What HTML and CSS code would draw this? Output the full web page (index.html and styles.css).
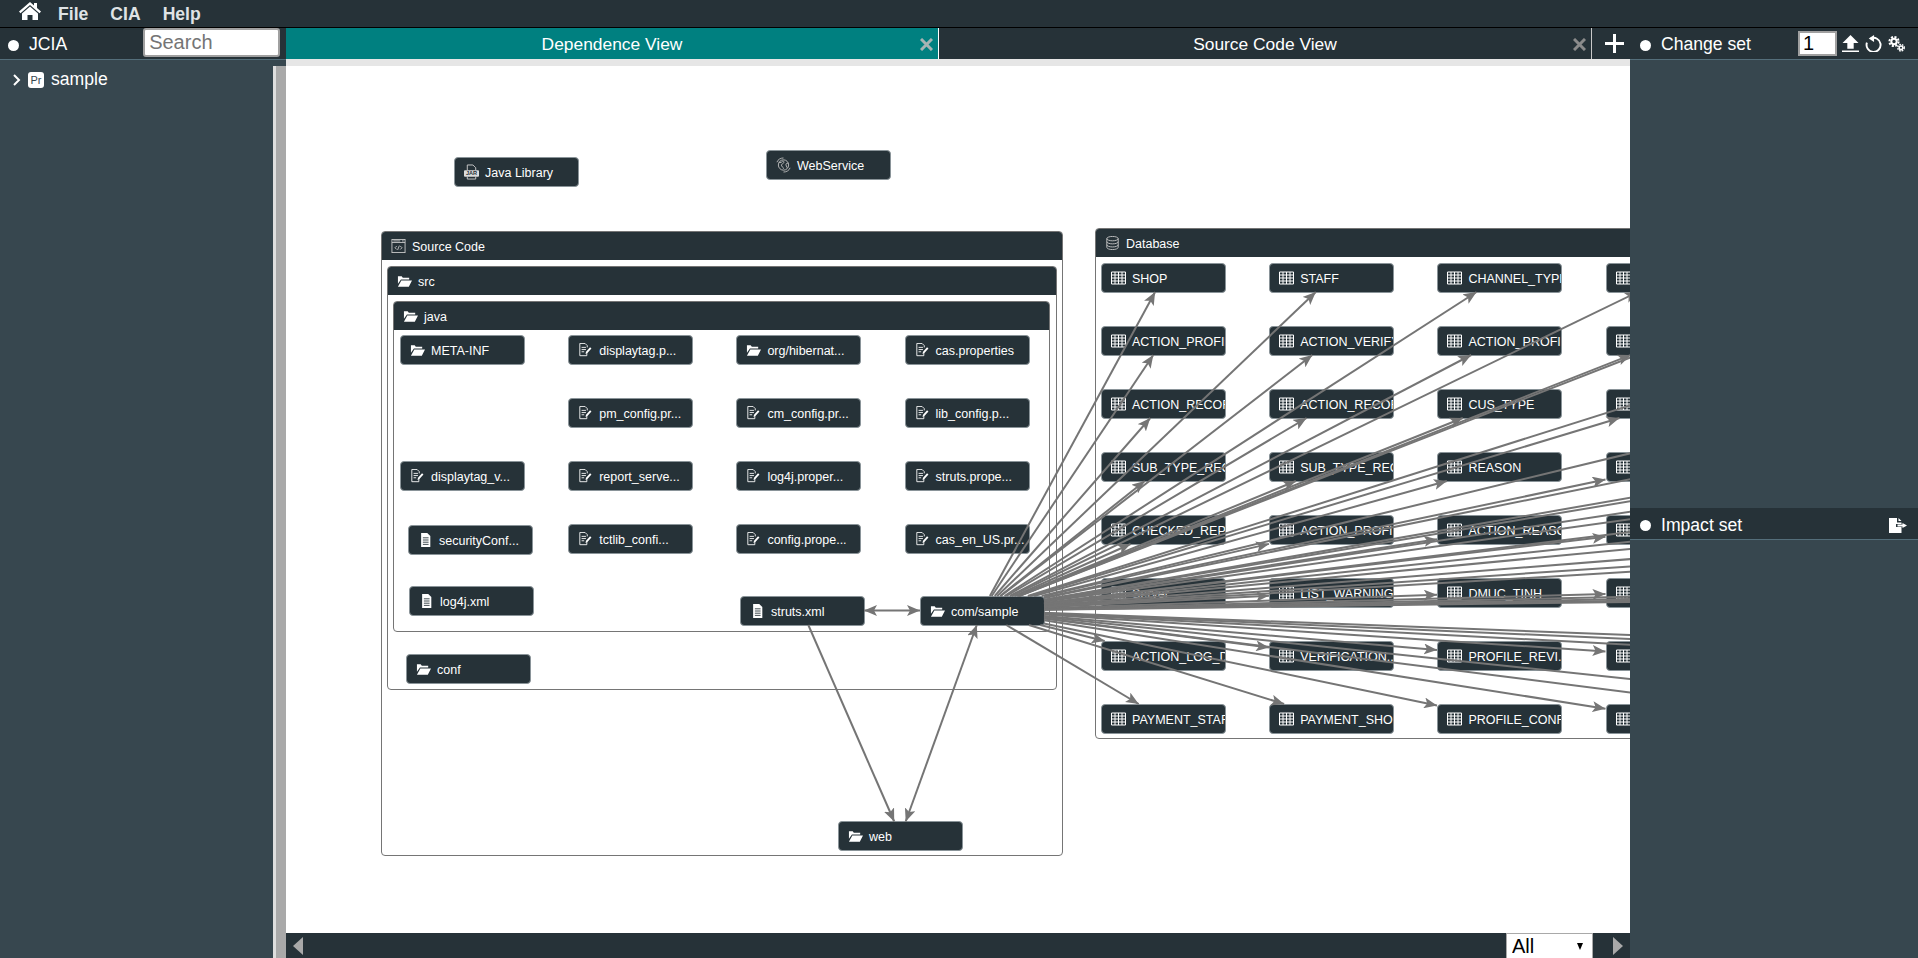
FILE: index.html

```html
<!DOCTYPE html>
<html lang="en">
<head>
  <meta charset="UTF-8" />
  <title>JCIA</title>
  <link rel="stylesheet" href="styles.css">
</head>
<body>
  <svg class="defs" aria-hidden="true">
    <symbol id="i-folder" viewBox="0 0 16 13">
      <path fill="#fff" d="M1 1.500h4l1.200 1.500H13v2H4.200L1 9.500zM4.600 6H16l-3.400 6.500H1z"/>
    </symbol>
    <symbol id="i-edit" viewBox="0 0 16 16">
      <path fill="none" stroke="#fff" d="M9.500 11.500v3h-8v-14h6l2.500 2.500v2M3.500 5h5M3.500 7.500h5M3.500 10h3"/>
      <path fill="#fff" d="M8 12.500l.6-2.400 4.600-5.200 1.600 1.400-4.600 5.200z"/>
    </symbol>
    <symbol id="i-file" viewBox="0 0 16 16">
      <path fill="#fff" d="M3 0h7l3.500 3.500V16H3z"/>
      <path stroke="#263238" d="M5 5.500h6.500M5 8h6.500M5 10.500h6.500M5 13h6.500"/>
    </symbol>
    <symbol id="i-table" viewBox="0 0 15 13">
      <path fill="none" stroke="#fff" d="M.5.500h14v12H.5zM.5 3.500h14M.5 6.500h14M.5 9.500h14M4 .5v12M7.500.5v12M11 .5v12"/>
    </symbol>
  </svg>

  <div class="app">
    <nav class="menu">
      <svg class="home" viewBox="0 0 24 20"><path fill="#fff" d="M12 1L1 10.500l1.500 1.700L12 4l9.500 8.200 1.500-1.700-4-3.400V2h-3v2.500z"/><path fill="#fff" d="M12 5.500l-8 6.900V19h5.500v-5h5v5H20v-6.600z"/></svg>
      <a class="menu-item">File</a>
      <a class="menu-item">CIA</a>
      <a class="menu-item">Help</a>
    </nav>

    <div class="workspace">
      <aside class="left">
        <div class="panel-head">
          <span class="dot"></span>
          <span class="panel-title">JCIA</span>
          <input class="search" type="text" placeholder="Search">
        </div>
        <div class="left-body">
          <div class="tree">
            <div class="tree-row">
              <svg class="chevron" viewBox="0 0 8 12"><path fill="none" stroke="#fff" stroke-width="2" d="M1.500 1l5 5-5 5"/></svg>
              <span class="pr">Pr</span>
              <span>sample</span>
            </div>
          </div>
          <div class="splitter"></div>
        </div>
      </aside>

      <main class="center">
        <div class="tabs">
          <div class="tab tab-active">
            <span>Dependence View</span>
            <svg class="close" viewBox="0 0 13 13"><path stroke="#a7b3b3" stroke-width="3" d="M1 1l11 11M12 1L1 12"/></svg>
          </div>
          <div class="tab">
            <span>Source Code View</span>
            <svg class="close" viewBox="0 0 13 13"><path stroke="#8b8b8b" stroke-width="3" d="M1 1l11 11M12 1L1 12"/></svg>
          </div>
          <svg class="plus" viewBox="0 0 19 19"><path stroke="#fff" stroke-width="3" d="M9.500 0v19M0 9.500h19"/></svg>
        </div>
        <div class="strip"></div>

        <div class="canvas">
          <div class="node node-jar">
            <svg class="ico ico-big" viewBox="0 0 16 16">
              <path fill="none" stroke="#ccc" d="M3.500 6V.5h6l3 3V6M3.500 13v2.500h9V13"/>
              <rect x="0" y="6" width="16" height="7" rx="1" fill="#ddd"/>
              <text x="8" y="11.500" font-size="6" font-weight="bold" text-anchor="middle" fill="#263238">JAR</text>
            </svg>
            <span class="label">Java Library</span>
          </div>
          <div class="node node-ws">
            <svg class="ico ico-big" viewBox="0 0 16 16">
              <g fill="none" stroke="#bbb"><circle cx="8" cy="8" r="5.500"/><path d="M3 5c2 1 3 0 4-1s2 1 1 2-3 1-2 3 2 1 2 3M13 6c-2 0-3 1-2 3s1 2 1 2M1 5C2 2 5 .5 8 .5M15 11c-1 3-4 4.500-7 4.500"/></g>
            </svg>
            <span class="label">WebService</span>
          </div>

          <section class="group group-source">
            <header class="group-head">
              <svg class="ico" viewBox="0 0 16 16">
                <g fill="none" stroke="#ccc"><rect x=".5" y=".5" width="15" height="15"/><path d="M.5 4h15M2 2.200h8M12 2.200h2M6 8L4 10l2 2M10 8l2 2-2 2M9 7.500l-2 5"/></g>
              </svg>
              <span class="label">Source Code</span>
            </header>
            <div class="group-body body-source">
              <section class="group group-src">
                <header class="group-head">
                  <svg class="ico"><use href="#i-folder"/></svg>
                  <span class="label">src</span>
                </header>
                <div class="group-body body-src">
                  <section class="group group-java">
                    <header class="group-head">
                      <svg class="ico"><use href="#i-folder"/></svg>
                      <span class="label">java</span>
                    </header>
                    <div class="group-body body-java">
                      <div class="grid grid-java">
                        <div class="node"><svg class="ico"><use href="#i-folder"/></svg><span class="label">META-INF</span></div>
                        <div class="node"><svg class="ico"><use href="#i-edit"/></svg><span class="label">displaytag.p...</span></div>
                        <div class="node"><svg class="ico"><use href="#i-folder"/></svg><span class="label">org/hibernat...</span></div>
                        <div class="node"><svg class="ico"><use href="#i-edit"/></svg><span class="label">cas.properties</span></div>

                        <div class="node col-2"><svg class="ico"><use href="#i-edit"/></svg><span class="label">pm_config.pr...</span></div>
                        <div class="node"><svg class="ico"><use href="#i-edit"/></svg><span class="label">cm_config.pr...</span></div>
                        <div class="node"><svg class="ico"><use href="#i-edit"/></svg><span class="label">lib_config.p...</span></div>

                        <div class="node"><svg class="ico"><use href="#i-edit"/></svg><span class="label">displaytag_v...</span></div>
                        <div class="node"><svg class="ico"><use href="#i-edit"/></svg><span class="label">report_serve...</span></div>
                        <div class="node"><svg class="ico"><use href="#i-edit"/></svg><span class="label">log4j.proper...</span></div>
                        <div class="node"><svg class="ico"><use href="#i-edit"/></svg><span class="label">struts.prope...</span></div>

                        <div class="node col-2"><svg class="ico"><use href="#i-edit"/></svg><span class="label">tctlib_confi...</span></div>
                        <div class="node"><svg class="ico"><use href="#i-edit"/></svg><span class="label">config.prope...</span></div>
                        <div class="node"><svg class="ico"><use href="#i-edit"/></svg><span class="label">cas_en_US.pr...</span></div>
                      </div>
                      <div class="node node-security"><svg class="ico"><use href="#i-file"/></svg><span class="label">securityConf...</span></div>
                      <div class="node node-log4j"><svg class="ico"><use href="#i-file"/></svg><span class="label">log4j.xml</span></div>
                      <div class="node node-struts"><svg class="ico"><use href="#i-file"/></svg><span class="label">struts.xml</span></div>
                      <div class="node node-sample"><svg class="ico"><use href="#i-folder"/></svg><span class="label">com/sample</span></div>
                    </div>
                  </section>
                  <div class="node node-conf"><svg class="ico"><use href="#i-folder"/></svg><span class="label">conf</span></div>
                </div>
              </section>
              <div class="node node-web"><svg class="ico"><use href="#i-folder"/></svg><span class="label">web</span></div>
            </div>
          </section>

          <section class="group group-db">
            <header class="group-head">
              <svg class="ico" viewBox="0 0 16 16">
                <g fill="none" stroke="#ccc"><ellipse cx="8" cy="3" rx="6.500" ry="2.500"/><path d="M1.500 3v10c0 1.400 3 2.500 6.500 2.500s6.500-1.100 6.500-2.500V3M1.500 6.500C1.500 7.900 4.500 9 8 9s6.500-1.100 6.500-2.500M1.500 10c0 1.400 3 2.500 6.500 2.500s6.500-1.100 6.500-2.500"/></g>
              </svg>
              <span class="label">Database</span>
            </header>
            <div class="group-body body-db">
              <div class="grid grid-db">
                <div class="node"><svg class="ico"><use href="#i-table"/></svg><span class="label">SHOP</span></div>
                <div class="node"><svg class="ico"><use href="#i-table"/></svg><span class="label">STAFF</span></div>
                <div class="node"><svg class="ico"><use href="#i-table"/></svg><span class="label">CHANNEL_TYPE</span></div>
                <div class="node"><svg class="ico"><use href="#i-table"/></svg></div>

                <div class="node"><svg class="ico"><use href="#i-table"/></svg><span class="label">ACTION_PROFILE</span></div>
                <div class="node"><svg class="ico"><use href="#i-table"/></svg><span class="label">ACTION_VERIFY</span></div>
                <div class="node"><svg class="ico"><use href="#i-table"/></svg><span class="label">ACTION_PROFILE</span></div>
                <div class="node"><svg class="ico"><use href="#i-table"/></svg></div>

                <div class="node"><svg class="ico"><use href="#i-table"/></svg><span class="label">ACTION_RECORD</span></div>
                <div class="node"><svg class="ico"><use href="#i-table"/></svg><span class="label">ACTION_RECORD</span></div>
                <div class="node"><svg class="ico"><use href="#i-table"/></svg><span class="label">CUS_TYPE</span></div>
                <div class="node"><svg class="ico"><use href="#i-table"/></svg></div>

                <div class="node"><svg class="ico"><use href="#i-table"/></svg><span class="label">SUB_TYPE_REC</span></div>
                <div class="node"><svg class="ico"><use href="#i-table"/></svg><span class="label">SUB_TYPE_REC</span></div>
                <div class="node"><svg class="ico"><use href="#i-table"/></svg><span class="label">REASON</span></div>
                <div class="node"><svg class="ico"><use href="#i-table"/></svg></div>

                <div class="node"><svg class="ico"><use href="#i-table"/></svg><span class="label">CHECKED_REP</span></div>
                <div class="node"><svg class="ico"><use href="#i-table"/></svg><span class="label">ACTION_PROFI</span></div>
                <div class="node"><svg class="ico"><use href="#i-table"/></svg><span class="label">ACTION_REASON</span></div>
                <div class="node"><svg class="ico"><use href="#i-table"/></svg></div>

                <div class="node"><svg class="ico"><use href="#i-table"/></svg><span class="label">Server</span></div>
                <div class="node"><svg class="ico"><use href="#i-table"/></svg><span class="label">LIST_WARNING</span></div>
                <div class="node"><svg class="ico"><use href="#i-table"/></svg><span class="label">DMUC_TINH</span></div>
                <div class="node"><svg class="ico"><use href="#i-table"/></svg></div>

                <div class="node"><svg class="ico"><use href="#i-table"/></svg><span class="label">ACTION_LOG_D</span></div>
                <div class="node"><svg class="ico"><use href="#i-table"/></svg><span class="label">VERIFICATION...</span></div>
                <div class="node"><svg class="ico"><use href="#i-table"/></svg><span class="label">PROFILE_REVI...</span></div>
                <div class="node"><svg class="ico"><use href="#i-table"/></svg></div>

                <div class="node"><svg class="ico"><use href="#i-table"/></svg><span class="label">PAYMENT_STAFF</span></div>
                <div class="node"><svg class="ico"><use href="#i-table"/></svg><span class="label">PAYMENT_SHOP</span></div>
                <div class="node"><svg class="ico"><use href="#i-table"/></svg><span class="label">PROFILE_CONF</span></div>
                <div class="node"><svg class="ico"><use href="#i-table"/></svg></div>
              </div>
            </div>
          </section>

          <!-- edges, in screen coordinates -->
          <svg class="edges" viewBox="286 66 1344 867">
            <defs>
              <marker id="arrow" viewBox="0 0 13 11" refX="13" refY="5.500" markerWidth="13" markerHeight="11" markerUnits="userSpaceOnUse" orient="auto-start-reverse">
                <path fill="#757575" d="M0 0l13 5.500L0 11l3-5.500z"/>
              </marker>
            </defs>
            <g stroke="#757575" stroke-width="2" marker-end="url(#arrow)">
              <line x1="864" y1="610.500" x2="920" y2="610.500" marker-start="url(#arrow)"/>
              <line x1="808.300" y1="625" x2="894.200" y2="821.500"/>
              <line x1="905.700" y1="821.500" x2="976.800" y2="625" marker-start="url(#arrow)"/>

              <line x1="989.900" y1="596" x2="1155.100" y2="292"/>
              <line x1="991.700" y1="596" x2="1153.300" y2="355"/>
              <line x1="994.700" y1="596" x2="1150.300" y2="418"/>
              <line x1="1000.200" y1="596" x2="1144.800" y2="481"/>
              <line x1="1014.400" y1="596" x2="1130.600" y2="544"/>
              <line x1="1044" y1="604.300" x2="1101" y2="598.700"/>
              <line x1="1040.300" y1="625" x2="1104.700" y2="641"/>
              <line x1="1006.300" y1="625" x2="1138.700" y2="704"/>

              <line x1="997.200" y1="596" x2="1315.800" y2="292"/>
              <line x1="1000.700" y1="596" x2="1312.300" y2="355"/>
              <line x1="1006.400" y1="596" x2="1306.600" y2="418"/>
              <line x1="1017.100" y1="596" x2="1295.900" y2="481"/>
              <line x1="1044" y1="596.100" x2="1269" y2="543.900"/>
              <line x1="1044" y1="607.300" x2="1269" y2="595.700"/>
              <line x1="1044" y1="618.500" x2="1269" y2="647.500"/>
              <line x1="1028.900" y1="625" x2="1284.100" y2="704"/>

              <line x1="1004.500" y1="596" x2="1476.500" y2="292"/>
              <line x1="1009.800" y1="596" x2="1471.200" y2="355"/>
              <line x1="1018.200" y1="596" x2="1462.800" y2="418"/>
              <line x1="1034.100" y1="596" x2="1446.900" y2="481"/>
              <line x1="1044" y1="600.800" x2="1437" y2="539.200"/>
              <line x1="1044" y1="608.300" x2="1437" y2="594.700"/>
              <line x1="1044" y1="615.900" x2="1437" y2="650.100"/>
              <line x1="1044" y1="623.400" x2="1437" y2="705.600"/>

              <line x1="1011.800" y1="596" x2="1637.700" y2="292"/>
              <line x1="1018.800" y1="596" x2="1630.700" y2="355"/>
              <line x1="1030" y1="596" x2="1619.500" y2="418"/>
              <line x1="1044" y1="597.500" x2="1605.500" y2="479.500"/>
              <line x1="1044" y1="603.200" x2="1605.500" y2="536.800"/>
              <line x1="1044" y1="608.900" x2="1605.500" y2="594.100"/>
              <line x1="1044" y1="614.600" x2="1605.500" y2="651.400"/>
              <line x1="1044" y1="620.300" x2="1605.500" y2="708.700"/>

              <line x1="1019.200" y1="596" x2="1798.300" y2="292"/>
              <line x1="1027.800" y1="596" x2="1789.700" y2="355"/>
              <line x1="1041.700" y1="596" x2="1775.800" y2="418"/>
              <line x1="1044" y1="600" x2="1773.500" y2="477"/>
              <line x1="1044" y1="604.600" x2="1773.500" y2="535.400"/>
              <line x1="1044" y1="609.200" x2="1773.500" y2="593.800"/>
              <line x1="1044" y1="613.800" x2="1773.500" y2="652.200"/>
              <line x1="1044" y1="618.300" x2="1773.500" y2="710.700"/>

              <line x1="1044" y1="597.900" x2="2003.500" y2="403.500"/>
              <line x1="1044" y1="601.800" x2="2003.500" y2="466.500"/>
              <line x1="1044" y1="605.600" x2="2003.500" y2="529.500"/>
              <line x1="1044" y1="609.400" x2="2003.500" y2="592.500"/>
              <line x1="1044" y1="613.200" x2="2003.500" y2="655.500"/>
              <line x1="1044" y1="617" x2="2003.500" y2="718.500"/>

              <line x1="1044" y1="599.700" x2="2171.500" y2="403.500"/>
              <line x1="1044" y1="603" x2="2171.500" y2="466.500"/>
              <line x1="1044" y1="606.300" x2="2171.500" y2="529.500"/>
              <line x1="1044" y1="609.600" x2="2171.500" y2="592.500"/>
              <line x1="1044" y1="612.800" x2="2171.500" y2="655.500"/>

              <line x1="1044" y1="601" x2="2339.500" y2="403.500"/>
              <line x1="1044" y1="603.900" x2="2339.500" y2="466.500"/>
              <line x1="1044" y1="606.800" x2="2339.500" y2="529.500"/>
              <line x1="1044" y1="609.700" x2="2339.500" y2="592.500"/>
            </g>
          </svg>
        </div>

        <div class="pager">
          <span class="tri tri-left"></span>
          <label class="filter">
            <select class="filter-select"><option>All</option></select>
          </label>
          <span class="tri tri-right"></span>
        </div>
      </main>

      <aside class="right">
        <div class="panel-head right-head">
          <span class="dot"></span>
          <span class="panel-title">Change set</span>
          <input class="num" type="text" value="1">
          <svg class="tool" viewBox="0 0 16 16"><path fill="#fff" d="M8 0l7.500 7.500H11V13H5V7.500H.5zM0 14.500h16V16H0z"/></svg>
          <svg class="tool" viewBox="0 0 16 16"><path fill="none" stroke="#fff" stroke-width="1.800" d="M5.500 3.200a6.600 6.600 0 1 1-3.700 4"/><path fill="#fff" d="M8.500 0v6.500L3.500 3.200z"/></svg>
          <svg class="tool" viewBox="0 0 17 16">
            <g fill="none" stroke="#fff">
              <circle cx="6" cy="6" r="2.700" stroke-width="2"/>
              <circle cx="6" cy="6" r="4.600" stroke-width="2" stroke-dasharray="2.100 1.500"/>
              <circle cx="13" cy="12.200" r="1.800" stroke-width="1.500"/>
              <circle cx="13" cy="12.200" r="3.200" stroke-width="1.500" stroke-dasharray="1.600 1"/>
            </g>
          </svg>
        </div>
        <div class="panel-head impact">
          <span class="dot"></span>
          <span class="panel-title">Impact set</span>
          <svg class="export" viewBox="0 0 19 15"><path fill="#fff" d="M0 0h8v4.500h4.500V6H7v3h5.500v6H0zM9.500 0l3 3h-3zM13.500 5l4.500 2.500L13.500 10V8.500H8.500v-2h5z"/></svg>
        </div>
      </aside>
    </div>
  </div>
</body>
</html>
```

FILE: styles.css

```css
* {
  box-sizing: border-box;
}
html, body {
  margin: 0;
  height: 100%;
  overflow: hidden;
}
body {
  font-family: "Liberation Sans", Arial, sans-serif;
  color: #fff;
  background-color: #37474f;
}
.defs {
  position: absolute;
  width: 0;
  height: 0;
}
.app {
  display: flex;
  flex-direction: column;
  height: 100vh;
}

/* top menu */
.menu {
  display: flex;
  align-items: center;
  height: 28px;
  padding: 1px 0 0 18px;
  background-color: #263238;
  border-bottom: 1px solid #000;
}
.home {
  width: 24px;
  height: 20px;
  margin-right: 16px;
  margin-top: -7px;
}
.menu-item {
  margin-right: 22px;
  font-size: 17.600px;
  font-weight: bold;
  color: #dfe3e5;
}

.workspace {
  display: flex;
  flex: 1;
  min-height: 0;
}

/* side panels */
.panel-head {
  display: flex;
  align-items: center;
  height: 32px;
  padding: 2px 0 0 8px;
  background-color: #263238;
  border-bottom: 1px solid #546e7a;
}
.dot {
  flex: none;
  width: 11px;
  height: 11px;
  margin-right: 10px;
  margin-top: 1px;
  border-radius: 50%;
  background-color: #fff;
}
.panel-title {
  font-size: 17.600px;
  white-space: nowrap;
}
.left {
  display: flex;
  flex-direction: column;
  flex: none;
  width: 286px;
}
.search {
  width: 137px;
  height: 29px;
  margin-left: 76px;
  margin-bottom: 5px;
  padding: 0 4px;
  font-family: inherit;
  font-size: 20px;
  border: 2px solid #a0a0a0;
  border-radius: 3px;
  background: #fff;
}
.search::placeholder {
  color: #757575;
}
.left-body {
  display: flex;
  flex: 1;
}
.tree {
  flex: 1;
  padding: 9px 0 0 12px;
}
.tree-row {
  display: flex;
  align-items: center;
  font-size: 17.600px;
}
.chevron {
  width: 9px;
  height: 12px;
  margin-right: 7px;
}
.pr {
  width: 16px;
  height: 16px;
  margin-right: 7px;
  font-size: 11px;
  line-height: 16px;
  text-align: center;
  color: #37474f;
  background-color: #fff;
  border-radius: 3px;
}
.splitter {
  flex: none;
  width: 13px;
  margin-top: 6px;
  background-color: #a9a9a9;
  border-left: 3px solid #dedede;
}

/* centre column */
.center {
  display: flex;
  flex-direction: column;
  flex: none;
  width: 1344px;
}
.tabs {
  display: flex;
  flex: none;
  height: 31px;
  background-color: #263238;
}
.tab {
  position: relative;
  display: flex;
  align-items: center;
  justify-content: center;
  width: 653px;
  padding-top: 2px;
  font-size: 17.400px;
  border-right: 1px solid #c9c9c9;
}
.tab-active {
  background-color: #008080;
  border-right-color: #fff;
}
.close {
  position: absolute;
  right: 5px;
  top: 10px;
  width: 13px;
  height: 13px;
}
.plus {
  width: 19px;
  height: 19px;
  margin: 6px 0 0 13px;
}
.strip {
  flex: none;
  height: 7px;
  background-color: #e6e6e6;
}
.canvas {
  position: relative;
  flex: 1;
  overflow: hidden;
  background-color: #fff;
}
.edges {
  position: absolute;
  left: 0;
  top: 0;
  width: 1344px;
  height: 867px;
  pointer-events: none;
}
.pager {
  display: flex;
  flex: none;
  align-items: center;
  justify-content: space-between;
  height: 25px;
  padding: 0 7px;
  background-color: #263238;
}
.tri {
  width: 0;
  height: 0;
  border-top: 9px solid transparent;
  border-bottom: 9px solid transparent;
}
.tri-left {
  border-right: 10px solid #a9a9a9;
}
.tri-right {
  margin-left: 20px;
  border-left: 10px solid #a9a9a9;
}
.filter {
  position: relative;
  margin-left: auto;
}
.filter::after {
  content: "";
  position: absolute;
  left: 71px;
  top: 10px;
  border-top: 7px solid #000;
  border-left: 3.500px solid transparent;
  border-right: 3.500px solid transparent;
}
.filter-select {
  display: block;
  width: 87px;
  height: 26px;
  padding: 0 0 0 5px;
  font-family: inherit;
  font-size: 20px;
  color: #000;
  background: #fff;
  border: 1px solid #a9a9a9;
  border-radius: 0;
  appearance: none;
}

/* diagram nodes */
.node {
  display: flex;
  align-items: center;
  width: 125px;
  height: 30px;
  padding-left: 9px;
  overflow: hidden;
  background-color: #263238;
  border: 1px solid #8a9499;
  border-radius: 4px;
}
.ico {
  flex: none;
  width: 15px;
  height: 14px;
  margin-right: 6px;
}
.ico-big {
  height: 16px;
}
.label {
  margin-top: 2px;
  font-size: 12.500px;
  white-space: nowrap;
}
.node-jar {
  position: absolute;
  left: 168px;
  top: 91px;
}
.node-ws {
  position: absolute;
  left: 480px;
  top: 84px;
}

/* nested boxes */
.group {
  display: flex;
  flex-direction: column;
  border: 1px solid #757575;
  border-radius: 4px;
}
.group-head {
  display: flex;
  flex: none;
  align-items: center;
  height: 28px;
  padding-left: 9px;
  background-color: #263238;
  border-radius: 3px 3px 0 0;
}
.group-body {
  position: relative;
  flex: 1;
}
.group-source {
  position: absolute;
  left: 95px;
  top: 165px;
  width: 682px;
  height: 625px;
}
.body-source, .body-src {
  padding: 6px 5px;
}
.group-src {
  width: 670px;
  height: 424px;
}
.group-java {
  width: 657px;
  height: 331px;
}
.body-java {
  padding: 5px 5px 5px 6px;
}
.group-db {
  position: absolute;
  left: 809px;
  top: 162px;
  width: 900px;
  height: 511px;
}
.body-db {
  padding: 6px 5px;
}
.grid {
  display: grid;
  grid-template-columns: repeat(4, 125px);
  grid-auto-rows: 30px;
  column-gap: 43.200px;
  row-gap: 33px;
}
.col-2 {
  grid-column-start: 2;
}
.node-security {
  position: absolute;
  left: 14px;
  top: 195px;
}
.node-log4j {
  position: absolute;
  left: 15px;
  top: 256px;
}
.node-struts {
  position: absolute;
  left: 346px;
  top: 266px;
}
.node-sample {
  position: absolute;
  left: 526px;
  top: 266px;
}
.node-conf {
  position: absolute;
  left: 18px;
  top: 359px;
}
.node-web {
  position: absolute;
  left: 456px;
  top: 561px;
}

/* right panel */
.right {
  flex: 1;
  min-width: 0;
}
.right-head {
  padding-left: 10px;
}
.num {
  width: 39px;
  height: 25px;
  margin: 0 5px 2px 47px;
  padding: 0 0 0 3px;
  font-family: inherit;
  font-size: 20px;
  color: #000;
  background: #fff;
  border: 2px solid #a0a0a0;
}
.tool {
  width: 17px;
  height: 17px;
  margin: 0 6px 2px 0;
}
.impact {
  margin-top: 448px;
  padding: 3px 0 0 10px;
}
.export {
  width: 19px;
  height: 15px;
  margin-left: auto;
  margin-right: 10px;
}
```
